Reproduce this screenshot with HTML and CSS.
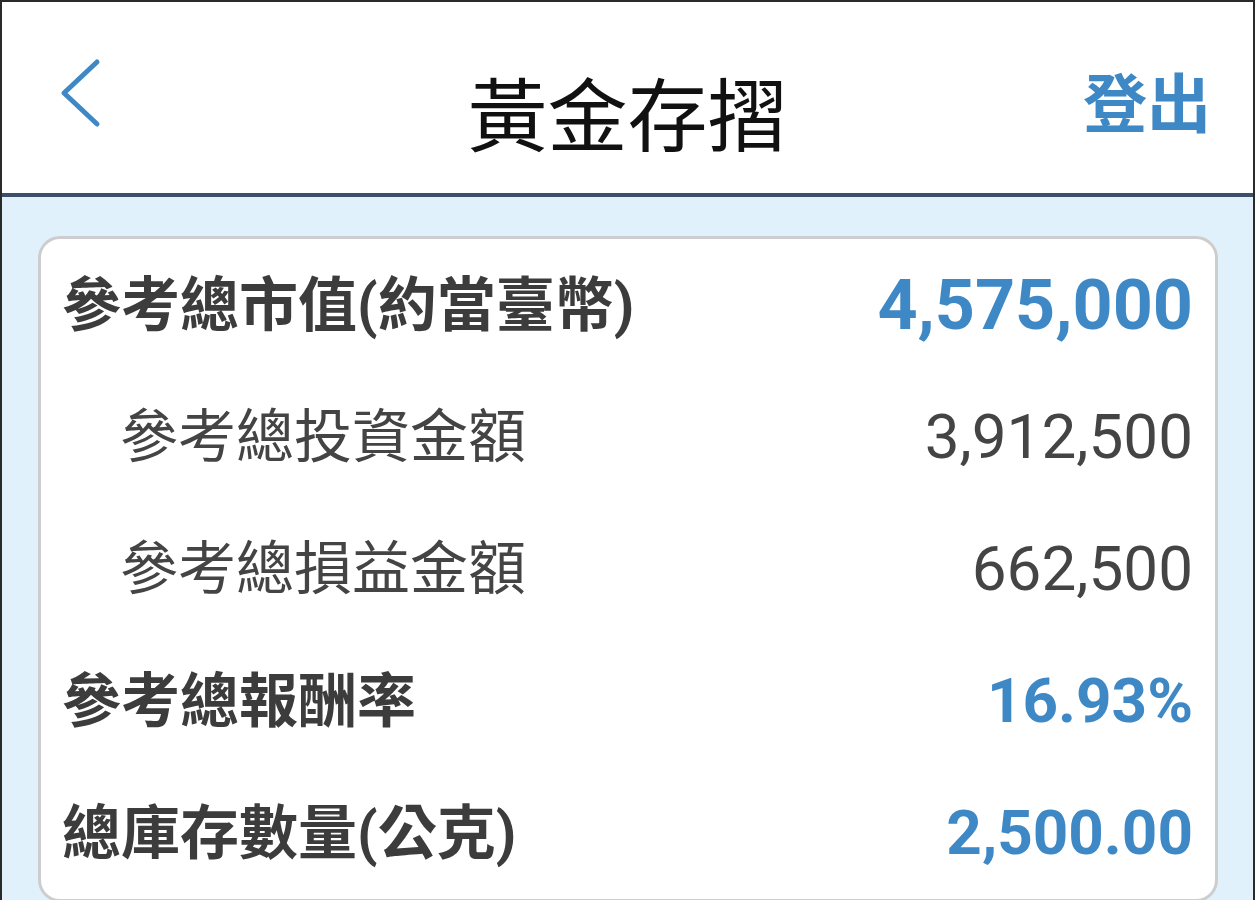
FILE: index.html
```html
<!DOCTYPE html>
<html lang="zh-Hant">
<head>
  <meta charset="UTF-8" />
  <meta name="viewport" content="width=device-width, initial-scale=1.0"/>
  <title>黃金存摺</title>
  <link rel="stylesheet" href="styles.css">
</head>
<body>
  <div class="frame">
    <header class="topbar">
      <a class="back" href="#" aria-label="返回">
        <svg width="44" height="74" viewBox="0 0 44 74">
          <polyline points="37,4 4,35 37,66" fill="none" stroke="#3f88c6" stroke-width="5" stroke-linecap="round" stroke-linejoin="round"/>
        </svg>
      </a>
      <h1 class="title">黃金存摺</h1>
      <a class="logout" href="#">登出</a>
    </header>

    <main class="content">
      <section class="card">
        <div class="row main">
          <span class="label">參考總市值(約當臺幣)</span>
          <span class="value big">4,575,000</span>
        </div>
        <div class="row sub">
          <span class="label">參考總投資金額</span>
          <span class="value">3,912,500</span>
        </div>
        <div class="row sub">
          <span class="label">參考總損益金額</span>
          <span class="value">662,500</span>
        </div>
        <div class="row main">
          <span class="label">參考總報酬率</span>
          <span class="value">16.93%</span>
        </div>
        <div class="row main">
          <span class="label">總庫存數量(公克)</span>
          <span class="value">2,500.00</span>
        </div>
      </section>
    </main>
  </div>
</body>
</html>
```

FILE: styles.css
```css
* {
  box-sizing: border-box;
}
html, body {
  margin: 0;
  height: 100%;
  overflow: hidden;
}
body {
  font-family: Roboto, "Noto Sans CJK TC", sans-serif;
  background: #e1f1fc;
}
.frame {
  height: 900px;
  border: 2px solid #2a2a2a;
  border-bottom: none;
  display: flex;
  flex-direction: column;
}
.topbar {
  height: 195px;
  flex: none;
  background: #fff;
  border-bottom: 4px solid #3b4f6b;
  display: grid;
  grid-template-columns: 1fr auto 1fr;
  align-items: start;
  padding: 0 42px;
}
.back {
  justify-self: start;
  margin: 56px 0 0 16px;
  display: block;
  line-height: 0;
}
.title {
  margin: 76px 0 0;
  font-size: 80px;
  font-weight: 400;
  line-height: 1;
  color: #111;
}
.logout {
  justify-self: end;
  margin-top: 72px;
  font-size: 64px;
  font-weight: 700;
  line-height: 1;
  color: #3f88c6;
  text-decoration: none;
}
.content {
  flex: 1;
  padding: 39px 35px 0 36px;
}
.card {
  background: #fff;
  border: 3px solid #cdcdcd;
  border-radius: 22px;
  padding: 0 22px 0 21px;
}
.row {
  height: 132px;
  display: flex;
  align-items: center;
  justify-content: space-between;
  color: #444;
}
.label {
  font-size: 59px;
  line-height: 1;
}
.main .label {
  font-weight: 700;
  color: #3c3c3c;
}
.sub .label {
  padding-left: 58px;
  font-size: 58px;
}
.value {
  font-size: 62px;
  line-height: 1;
}
.main .value {
  font-weight: 700;
  color: #3f88c6;
}
.value.big {
  font-size: 70px;
}
```
